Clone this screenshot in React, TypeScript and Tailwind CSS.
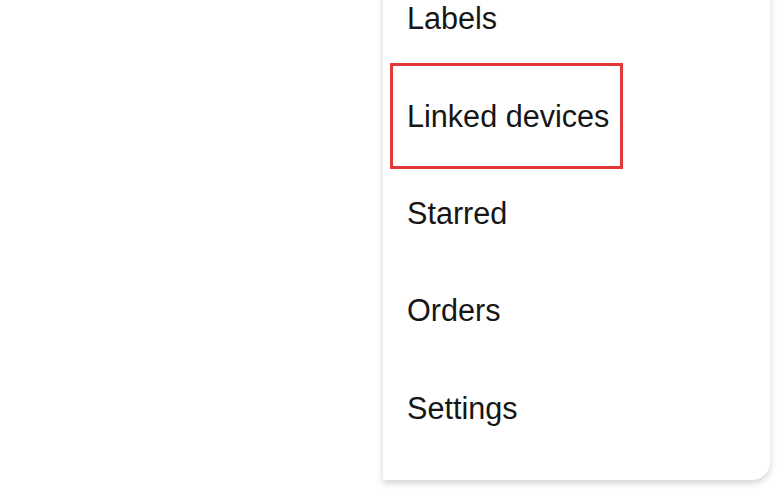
const items = ["Labels", "Linked devices", "Starred", "Orders", "Settings"];

// Highlighted entry gets the red annotation box
const highlighted = "Linked devices";

export default function App() {
    return (
        <div
            className="w-[780px] h-[500px] bg-white overflow-hidden"
            style={{ fontFamily: '"Liberation Sans", Arial, sans-serif' }}
        >
            {/* Menu panel */}
            <div className="ml-[383px] w-[387px] -mt-[30px] pb-[22px] bg-white rounded-br-[18px] shadow-[0_3px_7px_rgba(0,0,0,0.18)]">
                {items.map((item) => (
                    <div key={item} className="h-[97.5px] flex items-center pl-6">
                        {item === highlighted ? (
                            <span className="-ml-[17px] pl-[14px] pr-[11px] pt-[3px] h-[106px] -mt-[1px] flex items-center border-[3px] border-[#e2383a] text-[30.6px] text-[#161616]">
                                {item}
                            </span>
                        ) : (
                            <span className="text-[30.6px] text-[#161616]">{item}</span>
                        )}
                    </div>
                ))}
            </div>
        </div>
    );
}
